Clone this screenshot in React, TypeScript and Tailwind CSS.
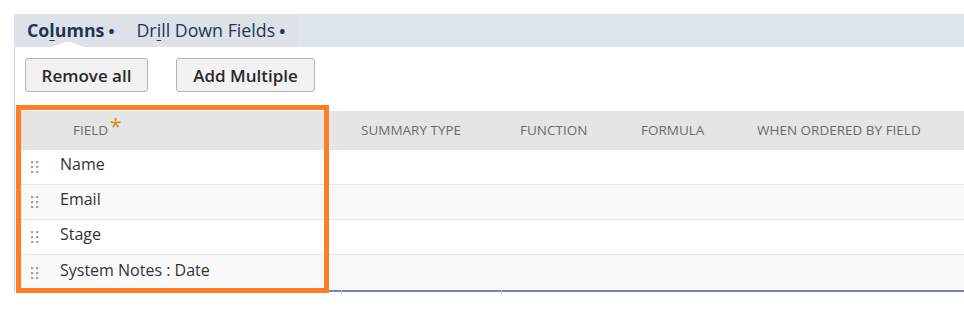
import React from "react";

const rows = ["Name", "Email", "Stage", "System Notes : Date"];

function Handle() {
  return (
    <svg width="8" height="12" viewBox="0 0 8 12" className="shrink-0">
      {[0, 5, 10].map((y) =>
        [0, 5].map((x) => (
          <rect key={`${x}-${y}`} x={x} y={y} width="2.2" height="2.2" fill="#a0a0a0" />
        ))
      )}
    </svg>
  );
}

export default function App() {
  return (
    <div className="relative w-[964px] h-[313px] bg-white font-['Open_Sans',sans-serif] pt-[14px] pl-[14px] overflow-hidden">
      {/* Tab bar */}
      <div className="flex h-[33px] bg-[#dfe5ef]">
        <div className="relative flex items-center w-[283px] bg-[#dde2ea] pl-[13px] text-[17.8px] text-[#253453]">
          <span className="font-bold">
            Co<span className="underline underline-offset-[3px] decoration-1">l</span>umns
          </span>
          <span className="ml-[4px] text-[16px] font-bold">•</span>
          <span className="ml-[22px]">
            Dr<span className="underline underline-offset-[3px] decoration-1">i</span>ll Down Fields
          </span>
          <span className="ml-[4px] text-[16px] font-bold">•</span>
          <svg className="absolute left-[38px] top-[28px]" width="32" height="5" viewBox="0 0 32 5">
            <polygon points="0,5 13,0 19,0 32,5" fill="#ffffff" />
          </svg>
        </div>
      </div>

      {/* Content */}
      <div className="border-l border-[#d3d3d3] h-[246px]">
        <div className="flex gap-[28px] pt-[11px] pl-[10px]">
          <button className="h-[34px] w-[123px] rounded-[3px] border border-[#b5b5b5] bg-[#f2f2f2] text-[17px] font-semibold text-[#2a2a2a] leading-none">
            Remove all
          </button>
          <button className="h-[34px] w-[139px] rounded-[3px] border border-[#b5b5b5] bg-[#f2f2f2] text-[17px] font-semibold text-[#2a2a2a] leading-none">
            Add Multiple
          </button>
        </div>

        <div className="mt-[19px] ml-[3px]">
          {/* Header */}
          <div className="flex items-center h-[39px] bg-[#e5e5e5] text-[13.5px] text-[#6b6b6b] uppercase">
            <div className="w-[343px] pl-[55px] flex items-start">
              <span>Field</span>
              <span className="text-[#d98a12] text-[21px] leading-none -mt-[4px] ml-[2px]">*</span>
            </div>
            <div className="w-[159px]">Summary Type</div>
            <div className="w-[121px]">Function</div>
            <div className="w-[116px]">Formula</div>
            <div className="flex-1">When Ordered By Field</div>
          </div>
          {/* Rows */}
          {rows.map((r, i) => (
            <div
              key={r}
              className={`flex items-center h-[35px] border-b border-[#e6e6e6] ${
                i % 2 === 0 ? "bg-white" : "bg-[#f9f9f9]"
              } ${i === rows.length - 1 ? "border-b-0" : ""}`}
            >
              <div className="w-[42px] pl-[13px] flex items-center">
                <Handle />
              </div>
              <span className="text-[16px] text-[#333] -mt-[6px]">{r}</span>
            </div>
          ))}
          <div className="relative h-[2px] bg-[#7287b2]">
            <div className="absolute left-[323px] top-0 w-px h-[4px] bg-[#c8c8c8]" />
            <div className="absolute left-[483px] top-0 w-px h-[4px] bg-[#c8c8c8]" />
          </div>
        </div>
      </div>

      {/* Orange highlight */}
      <div className="absolute left-[16px] top-[105px] w-[313px] h-[188px] border-[5px] border-[#fd7e24] pointer-events-none" />
    </div>
  );
}
